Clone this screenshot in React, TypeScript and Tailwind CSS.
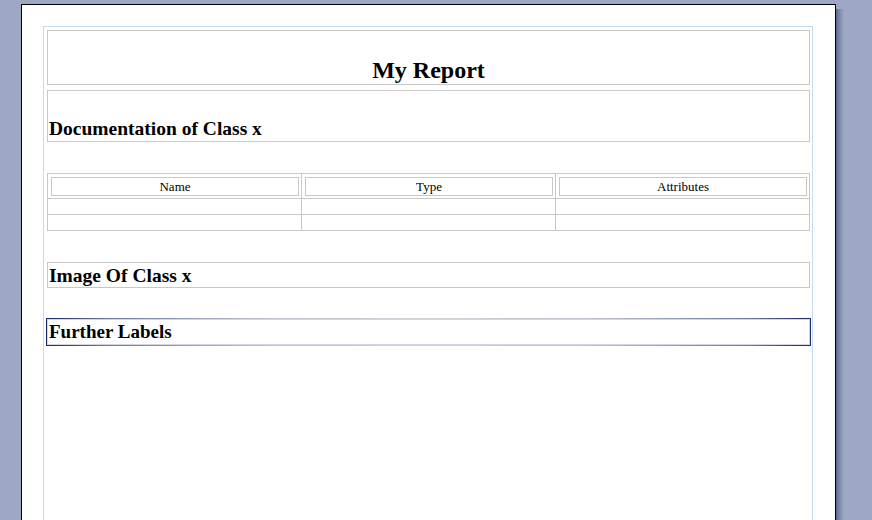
import React from "react";

const serif = { fontFamily: '"Liberation Serif", "Times New Roman", serif' };

export default function App() {
  return (
    <div
      className="w-full h-[520px] overflow-hidden bg-[#9ea7c3] text-black"
      style={serif}
    >
      <div className="flex items-start pl-[21px] pt-[4px]">
        {/* page */}
        <div className="w-[815px] h-[620px] bg-white border border-black pl-[21px] pr-[22px] pt-[21px] shrink-0">
          {/* frame */}
          <div className="w-[770px] h-[600px] border border-[#c2ddf1] pl-[3px] pr-[2px] pt-[3px] flex flex-col">
            {/* title */}
            <div className="h-[55px] border border-[#c8c8c8] flex items-end justify-center">
              <span className="text-[24px] leading-[28px] font-bold">My Report</span>
            </div>
            {/* documentation */}
            <div className="mt-[5px] h-[52px] border border-[#c8c8c8] flex items-end pl-[1px]">
              <span className="text-[19.5px] leading-[25px] font-bold">Documentation of Class x</span>
            </div>
            {/* table */}
            <div className="mt-[31px] border border-[#c8c8c8] flex flex-col text-[13px]">
              <div className="flex h-[24px]">
                {["Name", "Type", "Attributes"].map((t, i) => (
                  <div
                    key={t}
                    className={
                      i === 0
                        ? "w-[253px] pt-[3px] pl-[3px] pr-[2px] pb-[2px]"
                        : "w-[254px] border-l border-[#c8c8c8] pt-[3px] pl-[3px] pr-[2px] pb-[2px]"
                    }
                  >
                    <div className="h-full border border-[#c8c8c8] flex items-center justify-center leading-[17px]">
                      {t}
                    </div>
                  </div>
                ))}
              </div>
              {[0, 1].map((r) => (
                <div key={r} className="flex h-[16px] border-t border-[#c8c8c8]">
                  <div className="w-[253px]" />
                  <div className="w-[254px] border-l border-[#c8c8c8]" />
                  <div className="w-[254px] border-l border-[#c8c8c8]" />
                </div>
              ))}
            </div>
            {/* image */}
            <div className="mt-[31px] h-[26px] border border-[#c8c8c8] flex items-start pl-[1px]">
              <span className="text-[19.5px] leading-[25px] font-bold">Image Of Class x</span>
            </div>
            {/* further labels (selected) */}
            <div className="mt-[30px] -mx-px h-[28px] p-px bg-[linear-gradient(90deg,#1b2a6b_0%,#6d78a3_8%,#c4c7d2_30%,#cfd0d6_50%,#c4c7d2_70%,#6d78a3_92%,#1b2a6b_100%)]">
              <div className="h-full bg-white border border-[#d3d6e0] flex items-start pl-[1px] overflow-hidden">
                <span className="text-[19px] leading-[24px] font-bold">Further Labels</span>
              </div>
            </div>
          </div>
        </div>
        {/* shadow */}
        <div className="mt-[5px] w-[8px] h-[620px] bg-[linear-gradient(90deg,#56668a_0%,#7a88a8_40%,#9ea7c3_100%)] shrink-0" />
      </div>
    </div>
  );
}
